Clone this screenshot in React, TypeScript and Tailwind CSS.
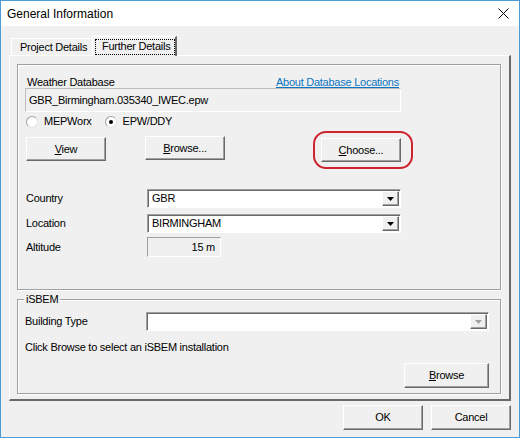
import React from 'react';

const font = { fontFamily: '"Liberation Sans", Arial, sans-serif' };

function Btn({ children, className = '' }: { children: React.ReactNode; className?: string }) {
  return (
    <div
      className={
        'flex items-center justify-center w-[80px] h-[24px] bg-[#f0f0f0] border border-t-white border-l-white border-r-[#696969] border-b-[#696969] shadow-[inset_-1px_-1px_0_#a0a0a0] text-[11px] text-black leading-none ' +
        className
      }
    >
      {children}
    </div>
  );
}

function Arrow({ disabled = false }: { disabled?: boolean }) {
  return (
    <div className="w-[17px] h-full flex items-center justify-center bg-[#f0f0f0] border border-t-white border-l-white border-r-[#696969] border-b-[#696969] shadow-[inset_-1px_-1px_0_#a0a0a0]">
      <svg width="7" height="4" viewBox="0 0 7 4">
        <path d="M0 0h7L3.5 4z" fill={disabled ? '#a0a0a0' : '#000'} />
      </svg>
    </div>
  );
}

function Combo({ value, disabled = false, className = '' }: { value: string; disabled?: boolean; className?: string }) {
  return (
    <div
      className={
        'flex items-stretch h-[19px] bg-white border border-t-[#a0a0a0] border-l-[#a0a0a0] border-r-white border-b-white shadow-[inset_1px_1px_0_#696969] p-[1px] ' +
        className
      }
    >
      <div className="flex-1 flex items-center pl-[3px] text-[11px] text-black">{value}</div>
      <Arrow disabled={disabled} />
    </div>
  );
}

function Radio({ checked, label }: { checked: boolean; label: string }) {
  return (
    <div className="flex items-center gap-[6px]">
      <div className="w-[12px] h-[12px] rounded-full bg-white border border-[#a0a0a0] border-b-[#e3e3e3] border-r-[#e3e3e3] flex items-center justify-center">
        {checked && <div className="w-[4px] h-[4px] rounded-full bg-black" />}
      </div>
      <span className="text-[11px] text-black">{label}</span>
    </div>
  );
}

function Group({ children, className = '' }: { children: React.ReactNode; className?: string }) {
  return (
    <div className={'relative border border-[#a0a0a0] shadow-[inset_1px_1px_0_#fff,1px_1px_0_#fff] ' + className}>
      {children}
    </div>
  );
}

export default function App() {
  return (
    <div className="w-[520px] h-[438px] bg-[#f0f0f0] border border-[#4f9bd5] flex flex-col text-black tracking-[-0.25px]" style={font}>
      <div className="h-[25px] bg-white flex items-center justify-between pl-[6px] pr-[10px]">
        <span className="text-[12px] tracking-normal">General Information</span>
        <svg width="11" height="11" viewBox="0 0 11 11">
          <path d="M0.5 0.5l10 10M10.5 0.5l-10 10" stroke="#000" strokeWidth="1" />
        </svg>
      </div>

      <div className="flex-1 flex flex-col px-[8px] pt-[10px]">
        {/* tabs */}
        <div className="flex items-start h-[19px] pl-[2px] relative z-10">
          <div className="w-[81px] h-[17px] mt-[2px] shrink-0 flex items-center pl-[8px] border-t border-l border-white text-[11px] whitespace-nowrap">
            Project Details
          </div>
          <div className="w-[85px] h-[20px] shrink-0 flex items-center pl-[2px] bg-[#f0f0f0] border-t border-l border-white border-r-2 border-r-[#696969] text-[11px] whitespace-nowrap">
            <span className="w-[80px] px-[6px] h-[16px] flex items-center border border-dotted border-black">Further Details</span>
          </div>
        </div>

        {/* tab panel */}
        <div className="h-[346px] flex flex-col border-t border-l border-white border-r-2 border-b-2 border-r-[#696969] border-b-[#696969] pl-[7px] pr-[8px] pt-[8px]">
          <Group className="h-[226px] flex flex-col pl-[7px] pt-[11px]">
            <div className="w-[376px] flex items-center justify-between h-[12px] text-[11px] leading-[12px]">
              <span className="pl-[2px]">Weather Database</span>
              <span className="text-[#0b74c0] underline pr-[2px]">About Database Locations</span>
            </div>
            <div className="w-[376px] h-[24px] flex items-center pl-[3px] border border-[#bdbdbd] border-b-white border-r-white text-[11px]">
              GBR_Birmingham.035340_IWEC.epw
            </div>
            <div className="flex items-center h-[15px] mt-[2px] pl-[1px] gap-[13px]">
              <Radio checked={false} label="MEPWorx" />
              <Radio checked={true} label="EPW/DDY" />
            </div>
            <div className="flex items-start h-[26px] mt-[7px] pl-[1px]">
              <Btn className="mt-[1px]">
                <span><span className="underline">V</span>iew</span>
              </Btn>
              <Btn className="ml-[39px]">
                <span><span className="underline">B</span>rowse...</span>
              </Btn>
              <div className="relative ml-[96px] mt-[2px]">
                <Btn>
                  <span><span className="underline">C</span>hoose...</span>
                </Btn>
                <div className="absolute -left-[8px] -right-[12px] -top-[7px] -bottom-[7px] border-2 border-[#cf2330] rounded-[13px]" />
              </div>
            </div>
            <div className="flex items-center h-[19px] mt-[27px] pl-[1px]">
              <span className="w-[121px] text-[11px]">Country</span>
              <Combo value="GBR" className="w-[254px]" />
            </div>
            <div className="flex items-center h-[19px] mt-[6px] pl-[1px]">
              <span className="w-[121px] text-[11px]">Location</span>
              <Combo value="BIRMINGHAM" className="w-[254px]" />
            </div>
            <div className="flex items-center h-[20px] mt-[4px] pl-[1px]">
              <span className="w-[121px] text-[11px]">Altitude</span>
              <div className="w-[74px] h-[20px] flex items-center justify-end pr-[5px] border border-[#a0a0a0] border-b-white border-r-white text-[11px]">
                15 m
              </div>
            </div>
          </Group>

          <Group className="h-[95px] mt-[9px] flex flex-col pl-[7px] pr-[11px] pt-[12px]">
            <span className="absolute -top-[7px] left-[6px] px-[2px] bg-[#f0f0f0] text-[11px] leading-[13px]">iSBEM</span>
            <div className="flex items-center h-[19px]">
              <span className="w-[121px] text-[11px]">Building Type</span>
              <Combo value="" disabled className="flex-1" />
            </div>
            <div className="mt-[10px] text-[11px] leading-[13px]">Click Browse to select an iSBEM installation</div>
            <div className="flex justify-end mt-[9px]">
              <Btn className="w-[85px] h-[25px]">
                <span><span className="underline">B</span>rowse</span>
              </Btn>
            </div>
          </Group>
        </div>

        <div className="flex justify-end gap-[8px] mt-[4px]">
          <Btn className="h-[25px]">OK</Btn>
          <Btn className="h-[25px]">Cancel</Btn>
        </div>
      </div>
    </div>
  );
}
